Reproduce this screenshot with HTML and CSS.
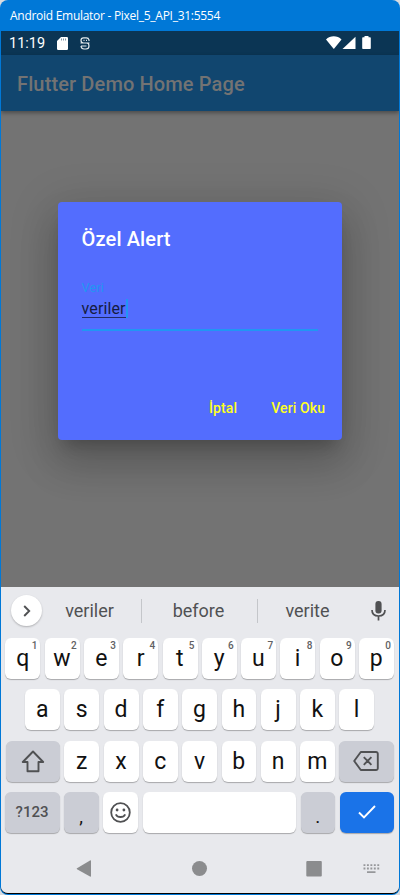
FILE: index.html
```html
<!DOCTYPE html>
<html lang="tr">
<head>
<meta charset="utf-8">
<title>Android Emulator</title>
<link rel="stylesheet" href="styles.css">
</head>
<body>
<div class="window">
  <header class="titlebar">Android Emulator - Pixel_5_API_31:5554</header>
  <div class="screen">
    <div class="status">
      <span class="clock">11:19</span>
      <svg class="sd" width="11" height="13" viewBox="0 0 11 13"><path fill="#fff" d="M4 0h5.800a1.200 1.200 0 0 1 1.200 1.200v10.600a1.200 1.200 0 0 1-1.200 1.200H1.200A1.200 1.200 0 0 1 0 11.800V4z"/><path stroke="#8297a6" stroke-width="1" d="M4.500 1.500v2M6.500 1.500v2M8.500 1.500v2"/></svg>
      <svg class="sicon" width="10" height="13" viewBox="0 0 10 13" fill="none" stroke="#e4e9ec" stroke-width="1.200"><path d="M9 4V2.800Q8.500.8 6.500.8h-3Q1 .8 1 3.300q0 2.700 2.500 2.700h3Q9 6 9 9q0 3-3 3H4Q1.300 12 1 9M.5 6h9M1 9h5.500M3.500 3.400h1M6 3.400h1"/></svg>
      <svg class="signals" width="46" height="14" viewBox="0 0 46 14" fill="#fff"><path d="M0 3.400C4-.7 11.500-.7 15.500 3.400L7.800 13z"/><path d="M29.500.7V13H16.500z"/><path d="M38 1.300h1.500V0h4v1.300H45a.8.8 0 0 1 .8.8v10.100a.8.8 0 0 1-.8.800h-7a.8.8 0 0 1-.8-.8V2.100a.8.8 0 0 1 .8-.8z" transform="translate(-1)"/></svg>
    </div>
    <div class="appbar">Flutter Demo Home Page</div>
    <main class="page">
      <section class="dialog">
        <h1>Özel Alert</h1>
        <div class="field">
          <label>Veri</label>
          <div class="input"><span>veriler</span><i class="caret"></i></div>
        </div>
        <div class="actions"><button class="cancel">İptal</button><button>Veri Oku</button></div>
      </section>
    </main>
    <section class="keyboard">
      <div class="suggestions">
        <span class="more"><svg width="8" height="12" viewBox="0 0 8 12" fill="none" stroke="#505153" stroke-width="1.900"><path d="M1.200 1l5 5-5 5"/></svg></span>
        <span class="word">veriler</span><span class="word mid">before</span><span class="word last">verite</span>
        <svg class="mic" width="15" height="20" viewBox="0 0 15 20"><rect x="4.400" y="0" width="6.200" height="12.500" rx="2.900" fill="#505153"/><path d="M1 9c0 4 2.800 6 6.500 6S14 13 14 9M7.500 15v4.500" fill="none" stroke="#505153" stroke-width="1.700"/></svg>
      </div>
      <div class="keys">
        <div class="row"><span class="key">q<sup>1</sup></span><span class="key">w<sup>2</sup></span><span class="key">e<sup>3</sup></span><span class="key">r<sup>4</sup></span><span class="key">t<sup>5</sup></span><span class="key">y<sup>6</sup></span><span class="key">u<sup>7</sup></span><span class="key">i<sup>8</sup></span><span class="key">o<sup>9</sup></span><span class="key">p<sup>0</sup></span></div>
        <div class="row"><span class="key">a</span><span class="key">s</span><span class="key">d</span><span class="key">f</span><span class="key">g</span><span class="key">h</span><span class="key">j</span><span class="key">k</span><span class="key">l</span></div>
        <div class="row">
          <span class="key wide gray"><svg width="24" height="23" viewBox="0 0 24 23" fill="none" stroke="#505153" stroke-width="1.900" stroke-linejoin="round"><path d="M12 1.500L1.800 12H6.500v9.200h11V12h4.700z"/></svg></span>
          <span class="key">z</span><span class="key">x</span><span class="key">c</span><span class="key">v</span><span class="key">b</span><span class="key">n</span><span class="key">m</span>
          <span class="key wide gray"><svg width="26" height="20" viewBox="0 0 26 20" fill="none" stroke="#505153" stroke-width="1.900" stroke-linejoin="round"><path d="M7.800 1H23a1.800 1.800 0 0 1 1.800 1.800v14.400A1.800 1.800 0 0 1 23 19H7.800L1.200 10zM10.800 6.200l7.600 7.600M18.400 6.200l-7.600 7.600"/></svg></span>
        </div>
        <div class="row">
          <span class="key wide gray sym">?123</span>
          <span class="key gray punct">,</span>
          <span class="key"><svg width="21" height="21" viewBox="0 0 21 21" fill="none" stroke="#505153" stroke-width="1.800"><circle cx="10.500" cy="10.500" r="9.300"/><path d="M5.800 12.300c1.800 3.600 7.600 3.600 9.400 0"/><g fill="#505153" stroke="none"><circle cx="7.100" cy="8" r="1.400"/><circle cx="13.900" cy="8" r="1.400"/></g></svg></span>
          <span class="key space"></span>
          <span class="key gray punct">.</span>
          <span class="key wide enter"><svg width="18" height="14" viewBox="0 0 18 14" fill="none" stroke="#fff" stroke-width="1.900"><path d="M1 7.500l5 5L17 1"/></svg></span>
        </div>
      </div>
      <nav class="navbar">
        <svg width="310" height="18" viewBox="0 0 310 18" fill="#8b8c8e"><path d="M1 8.200L14 .4q1-.4 1 .6v15q0 1-1 .6L1 9.300q-.8-.5 0-1.100z"/><circle cx="123.500" cy="8.500" r="7.500"/><rect x="230.300" y="1" width="15.500" height="15.500" rx="1"/><g fill="none" stroke="#96979a" stroke-width="1.800"><path stroke-dasharray="1.900 1.550" d="M287.500 5.200h16M287.500 8.500h16"/><path d="M291 12.200h8.500"/></g></svg>
      </nav>
    </section>
  </div>
</div>
</body>
</html>
```
FILE: styles.css
```css
* { box-sizing: border-box; }
body { margin: 0; background: #d9dce0; font-family: Roboto, sans-serif; }
.window { width: 400px; height: 895px; background: #0078d7; border-radius: 8px; padding: 0 1px 1px; overflow: hidden; }
.titlebar { height: 31px; padding-left: 9px; color: #fff; font: 12px/31px "Open Sans", sans-serif; letter-spacing: -0.28px; white-space: nowrap; }
.screen { height: 863px; display: flex; flex-direction: column; background: #737373; border-bottom: 1px solid #000; border-radius: 0 0 7px 7px; overflow: hidden; }
.status { height: 24px; background: #0b3554; display: flex; align-items: center; padding: 0 27px 0 8px; color: #fff; flex: none; }
.clock { width: 48px; font-size: 14.5px; line-height: 25px; }
.sicon { margin-left: 12px; }
.signals { margin-left: auto; }
.appbar { height: 56px; flex: none; background: #11466f; color: #737373; font-size: 20px; font-weight: 500; line-height: 58px; letter-spacing: .13px; padding-left: 16px; box-shadow: 0 2px 4px rgba(0,0,0,.35); z-index: 1; }
.page { height: 476px; flex: none; padding: 91.4px 56.6px 0; }
.dialog { width: 284px; height: 238px; background: #536dfe; border-radius: 4px; box-shadow: 0 11px 15px -7px rgba(0,0,0,.2), 0 24px 38px 3px rgba(0,0,0,.14), 0 9px 46px 8px rgba(0,0,0,.12); padding: 24px 0 0 24px; }
h1 { margin: 0; color: #fff; font-size: 20px; line-height: 26px; font-weight: 500; letter-spacing: .13px; }
.field { width: 236px; height: 53px; margin-top: 26px; border-bottom: 2px solid #2196f3; }
.field label { display: block; font-size: 12.5px; line-height: 20px; letter-spacing: .2px; color: #2196f3; }
.input { display: flex; align-items: center; color: #151b40; font-size: 16px; line-height: 24px; letter-spacing: .1px; }
.input span { border-bottom: 1px solid #202a66; line-height: 17px; margin-top: 2px; }
.caret { width: 2px; height: 19px; background: #2196f3; }
.actions { display: flex; justify-content: flex-end; padding: 68px 16.5px 0 0; gap: 34px; }
button { border: 0; padding: 0; background: none; color: #ffff1f; font: 500 14px/18px Roboto, sans-serif; letter-spacing: .12px; }
.keyboard { flex: 1; background: #e8e9ed; padding-top: 1px; }
.suggestions { height: 50px; padding: 0 13.5px 5px 10px; display: flex; align-items: center; color: #505153; }
.more { width: 31px; height: 31px; border-radius: 50%; background: #fff; display: flex; align-items: center; justify-content: center; box-shadow: 0 1px 2px rgba(0,0,0,.25); }
.word { width: 99px; text-align: center; font-size: 18px; line-height: 24px; padding-right: 4px; }
.word.mid { width: 117px; border: 1px solid #c4c6ca; border-width: 0 1px; padding-right: 2px; }
.word.last { width: 101px; padding-right: 2px; }
.mic { margin-left: auto; }
.keys { padding: 0 4.6px 0 4px; display: flex; flex-direction: column; gap: 10.3px; }
.row { display: flex; justify-content: center; gap: 4.4px; height: 41px; }
.key { width: 34.9px; height: 41px; flex: none; border-radius: 6px; background: #fff; box-shadow: 0 1px 1px rgba(0,0,0,.28); display: flex; align-items: center; justify-content: center; position: relative; font-size: 23px; color: #111; padding-right: .5px; }
.key sup { position: absolute; top: 3px; right: 3px; font-size: 10px; font-weight: 500; line-height: 10px; color: #606163; }
.wide { width: 54.5px; }
.gray { background: #cbcdd5; }
.sym { font-size: 15px; color: #505153; font-weight: 500; }
.punct { padding-top: 9px; font-size: 19px; }
.space { width: 153.7px; }
.enter { background: #1a73e8; }
.navbar { padding: 27px 0 0 75px; }
```
